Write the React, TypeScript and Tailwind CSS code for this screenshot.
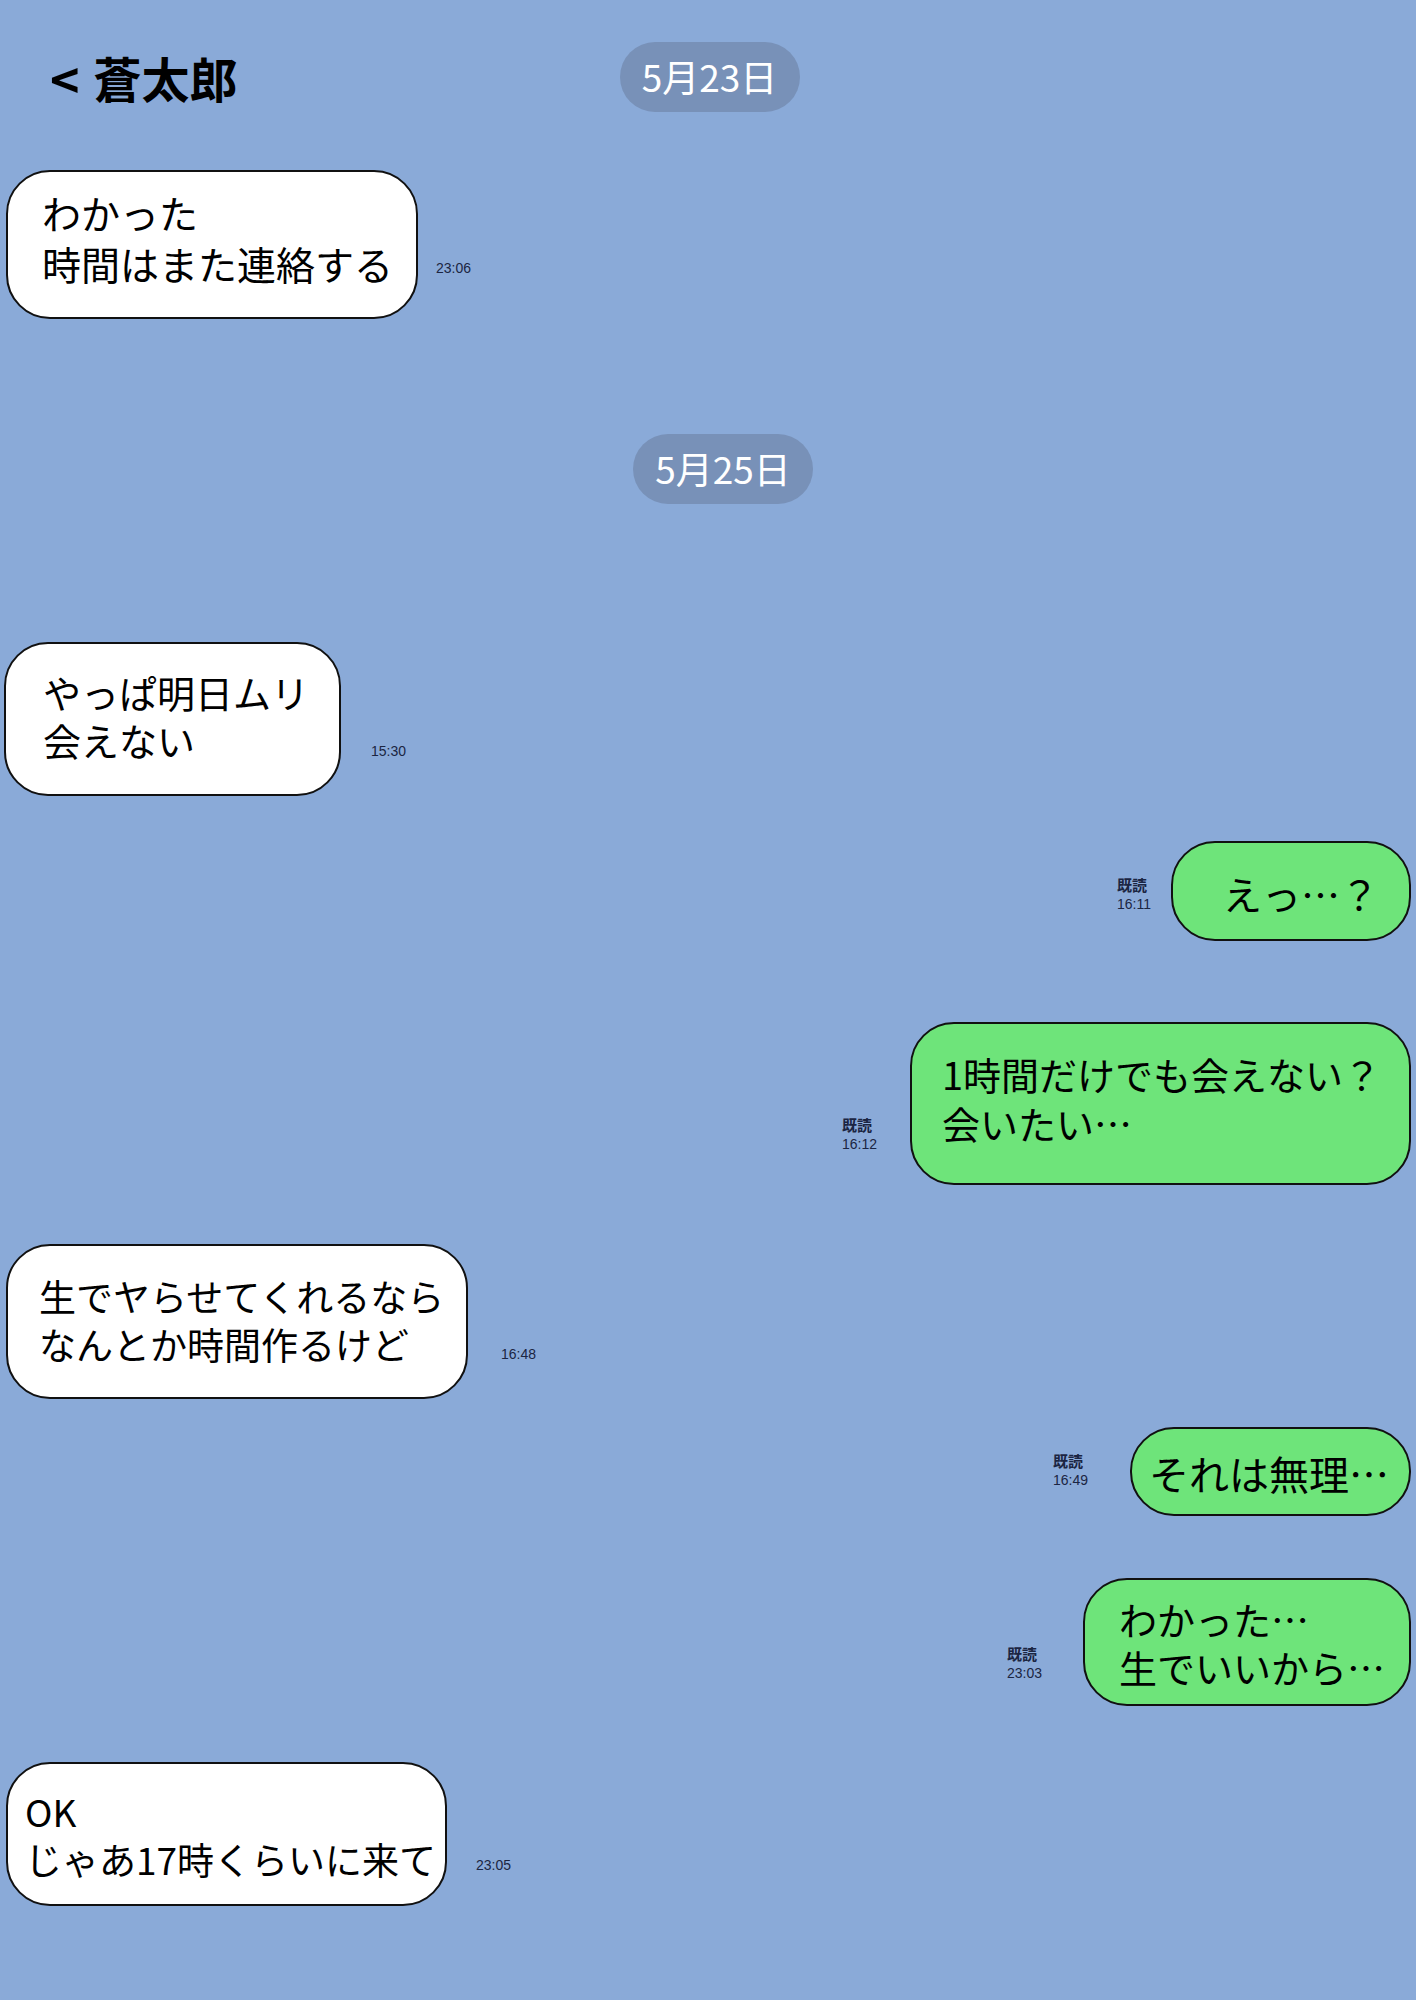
const jp = "font-['Noto_Sans_CJK_JP','Noto_Sans',sans-serif]";

type Msg = {
  side: "left" | "right";
  lines: string[];
  time: string;
  mt: string;
  box: string;
  text: string;
  meta: string;
};

const messages: Msg[] = [
  {
    side: "left",
    lines: ["わかった", "時間はまた連絡する"],
    time: "23:06",
    mt: "mt-[58px]",
    box: "w-[412px] h-[149px] ml-[6px] pl-[34px] pb-[14px]",
    text: "text-[39px] leading-[51px]",
    meta: "ml-[18px] mb-[42px]",
  },
];

const afterPill: Msg[] = [
  {
    side: "left",
    lines: ["やっぱ明日ムリ", "会えない"],
    time: "15:30",
    mt: "mt-[138px]",
    box: "w-[337px] h-[154px] ml-[4px] pl-[37px] pb-[6px]",
    text: "text-[38px] leading-[48px]",
    meta: "ml-[30px] mb-[36px]",
  },
  {
    side: "right",
    lines: ["えっ…？"],
    time: "16:11",
    mt: "mt-[45px]",
    box: "w-[240px] h-[100px] pl-[50px] pt-[4px]",
    text: "text-[39px] leading-[48px]",
    meta: "mr-[20px] mb-[28px]",
  },
  {
    side: "right",
    lines: ["1時間だけでも会えない？", "会いたい…"],
    time: "16:12",
    mt: "mt-[81px]",
    box: "w-[501px] h-[163px] pl-[30px] pb-[12px]",
    text: "text-[38px] leading-[49px]",
    meta: "mr-[33px] mb-[32px]",
  },
  {
    side: "left",
    lines: ["生でヤらせてくれるなら", "なんとか時間作るけど"],
    time: "16:48",
    mt: "mt-[59px]",
    box: "w-[462px] h-[155px] ml-[6px] pl-[31px] pb-[4px]",
    text: "text-[37px] leading-[48px]",
    meta: "ml-[33px] mb-[36px]",
  },
  {
    side: "right",
    lines: ["それは無理…"],
    time: "16:49",
    mt: "mt-[28px]",
    box: "w-[281px] h-[89px] pl-[17px] pt-[2px]",
    text: "text-[40px] leading-[48px]",
    meta: "mr-[42px] mb-[27px]",
  },
  {
    side: "right",
    lines: ["わかった…", "生でいいから…"],
    time: "23:03",
    mt: "mt-[62px]",
    box: "w-[328px] h-[128px] pl-[34px] pt-[2px]",
    text: "text-[38px] leading-[48px]",
    meta: "mr-[41px] mb-[24px]",
  },
  {
    side: "left",
    lines: ["OK", "じゃあ17時くらいに来て"],
    time: "23:05",
    mt: "mt-[56px]",
    box: "w-[441px] h-[144px] ml-[6px] pl-[17px] pt-[2px]",
    text: "text-[37px] leading-[48px]",
    meta: "ml-[29px] mb-[32px]",
  },
];

function Bubble({ m }: { m: Msg }) {
  const bubble = (
    <div
      className={`${m.box} shrink-0 flex flex-col justify-center rounded-[44px] border-2 border-[#111] text-black ${
        m.side === "left" ? "bg-white" : "bg-[#6ee47a]"
      }`}
    >
      <p className={`${m.text} ${jp} whitespace-nowrap`}>
        {m.lines.map((l, i) => (
          <span key={l}>
            {i > 0 && <br />}
            {l}
          </span>
        ))}
      </p>
    </div>
  );

  if (m.side === "left") {
    return (
      <div className={`${m.mt} flex items-end`}>
        {bubble}
        <span
          className={`${m.meta} text-[14px] leading-[18px] text-[#1b2542] font-['Liberation_Sans',sans-serif]`}
        >
          {m.time}
        </span>
      </div>
    );
  }

  return (
    <div className={`${m.mt} flex items-end justify-end pr-[5px]`}>
      <div className={`${m.meta} flex flex-col text-[#1b2542]`}>
        <span className={`${jp} font-bold text-[15px] leading-[20px]`}>既読</span>
        <span className="font-['Liberation_Sans',sans-serif] text-[14px] leading-[18px]">
          {m.time}
        </span>
      </div>
      {bubble}
    </div>
  );
}

function DatePill({ label, className = "" }: { label: string; className?: string }) {
  return (
    <div
      className={`w-[180px] h-[70px] rounded-full bg-[#7891b8] flex items-center justify-center text-white text-[37px] ${jp} ${className}`}
    >
      {label}
    </div>
  );
}

export default function App() {
  return (
    <div className="w-[1416px] min-h-[2000px] bg-[#8aaad8] flex flex-col pt-[42px] pb-[94px]">
      {/* header */}
      <div className="h-[70px] grid grid-cols-[1fr_auto_1fr] items-center">
        <h1
          className={`h-[70px] pl-[50px] flex items-center gap-[14px] text-[48px] leading-[70px] font-bold text-black ${jp}`}
        >
          <span className="text-[50px]">&lt;</span>
          <span>蒼太郎</span>
        </h1>
        <DatePill label="5月23日" className="ml-[3px]" />
        <div />
      </div>

      {messages.map((m) => (
        <Bubble key={m.time} m={m} />
      ))}

      <div className="mt-[115px] flex justify-center">
        <DatePill label="5月25日" className="ml-[30px]" />
      </div>

      {afterPill.map((m) => (
        <Bubble key={m.time} m={m} />
      ))}
    </div>
  );
}
